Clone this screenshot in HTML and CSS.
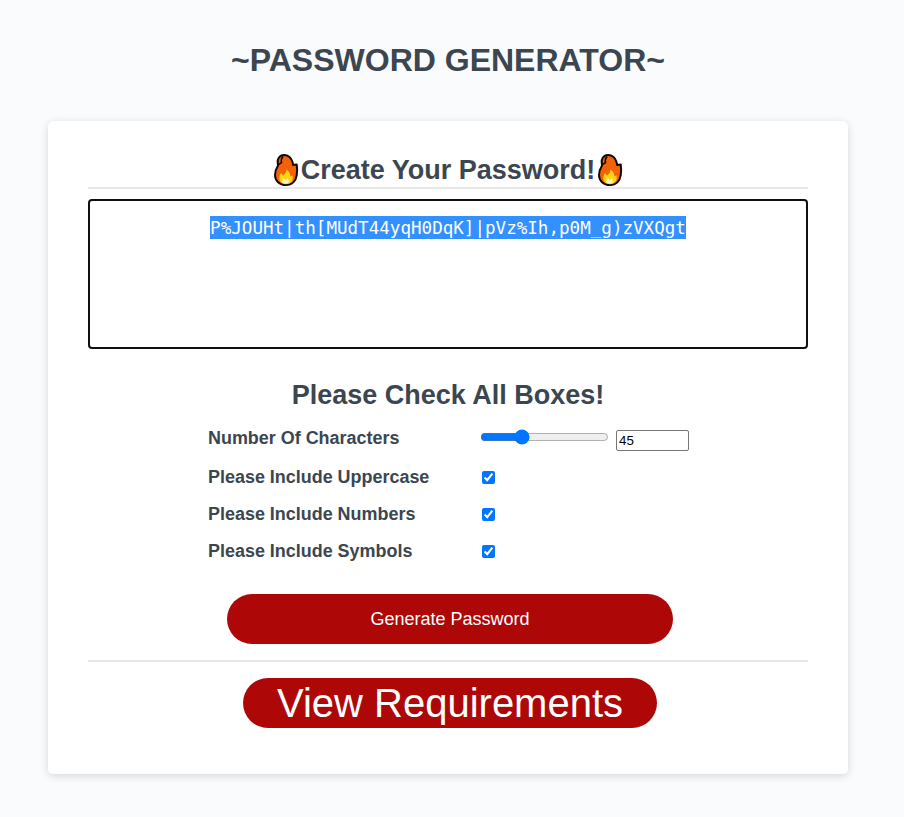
FILE: index.html
```html
<!DOCTYPE html>
<html lang="en">
<head>
<meta charset="utf-8">
<title>Password Generator</title>
<link rel="stylesheet" href="styles.css">
</head>
<body>
<svg class="defs" width="0" height="0" aria-hidden="true">
  <symbol id="flame" viewBox="0 0 26 34">
    <path d="M5 12.4C4.2 8.5 4.6 5.2 7.2 3.2 9.4 2 12 1.8 14.4 2.7c3.2 1.4 5 4.3 5.8 9.3l3.5-.6c.5 3.2.7 7.3 0 11C22.9 28 19 32 13 32 6.5 32 2 27.8 2 22c0-4.2 1.3-6.8 3-9.6Z" fill="#f4610b" stroke="#0b0907" stroke-width="2" stroke-linejoin="round"/>
    <path d="M10 3.5C8.2 5.6 8 7.6 8.5 9.6L5.4 11.6" fill="none" stroke="#0b0907" stroke-width="1.6"/>
    <path d="M8 29.4C5.6 26.6 6 23.3 8 20l2 2.6c2.1-1.5 3.5-3.7 3.5-6.1 2.5 1.8 3.9 4.2 3.9 7l2-1.2c1 3.6-.1 6.4-2.6 8-3.2 1.4-6.5 1-8.8-.9Z" fill="#ffd414"/>
    <path d="M9.6 29.8c-.7-2 .1-3.4 1.4-4.6l1.7 1.8 2-1.5c1.3 1.5 1.5 3 .8 4.3-1.9 1-4.1 1-5.9 0Z" fill="#fff6b8"/>
  </symbol>
</svg>
<h1 class="title">~PASSWORD GENERATOR~</h1>
<main class="card">
  <header class="card-header">
    <svg class="flame"><use href="#flame"/></svg>
    <h2>Create Your Password!</h2>
    <svg class="flame"><use href="#flame"/></svg>
  </header>
  <div class="output"><span class="selected">P%JOUHt|th[MUdT44yqH0DqK]|pVz%Ih,p0M_g)zVXQgt</span></div>
  <h2 class="subtitle">Please Check All Boxes!</h2>
  <form class="options">
    <label for="range">Number Of Characters</label>
    <div class="amount">
      <input id="range" class="range" type="range" min="1" max="128" value="39">
      <input class="number" type="text" value="45" aria-label="Characters">
    </div>
    <label for="upper">Please Include Uppercase</label>
    <input id="upper" class="check" type="checkbox" checked>
    <label for="numbers">Please Include Numbers</label>
    <input id="numbers" class="check" type="checkbox" checked>
    <label for="symbols">Please Include Symbols</label>
    <input id="symbols" class="check" type="checkbox" checked>
  </form>
  <button class="btn generate" type="button">Generate Password</button>
  <footer class="card-footer">
    <button class="btn requirements" type="button">View Requirements</button>
  </footer>
</main>
</body>
</html>
```
FILE: styles.css
```css
* { box-sizing: border-box; }
body {
  margin: 0;
  height: 817px;
  overflow: hidden;
  background: #fafbfd;
  color: #3b4650;
  font-family: "Liberation Sans", Arial, sans-serif;
}
.defs { display: block; }
h1, h2 { margin: 0; }
.title {
  width: 896px;
  padding-top: 40px;
  font-size: 32px;
  line-height: 40px;
  text-align: center;
}
.card {
  width: 800px;
  height: 653px;
  margin: 41px 0 0 48px;
  padding: 31px 40px 0;
  background: #fff;
  border-radius: 5px;
  box-shadow: 0 2px 8px rgba(0, 0, 0, .15);
}
.card-header {
  display: flex;
  justify-content: center;
  align-items: center;
  gap: 2px;
  height: 37px;
  border-bottom: 2px solid #e7e7e7;
}
h2 { font-size: 27px; line-height: 35px; white-space: nowrap; }
.card-header h2 { padding-top: 2px; line-height: 33px; }
.flame { width: 26px; height: 34px; flex: none; }
.output {
  height: 150px;
  margin-top: 10px;
  padding-top: 15px;
  border: 2px solid #101010;
  border-radius: 4px;
  text-align: center;
}
.selected {
  display: inline-block;
  height: 23px;
  background: #3390ff;
  color: #fff;
  font: 17.57px/25px "DejaVu Sans Mono", monospace;
  white-space: nowrap;
}
.subtitle { margin-top: 29px; text-align: center; }
.options {
  display: grid;
  grid-template-columns: 272px 209px;
  grid-template-rows: 44px repeat(3, 37px);
  align-items: center;
  width: 481px;
  margin: 2px 0 0 120px;
  font-size: 17.95px;
  font-weight: bold;
}
.options > :nth-child(-n+2) { margin-top: 2px; }
.amount { display: flex; align-items: center; gap: 7px; }
.range { width: 129px; height: 16px; margin: 0 0 2px; }
.number {
  width: 73px;
  height: 21px;
  margin-top: 5px;
  padding: 1px 2px;
  border: 1px solid #767676;
  border-radius: 2px;
  font: 13.333px "Liberation Sans", Arial, sans-serif;
  color: #000;
}
.check { width: 13px; height: 13px; margin: 0 0 0 2px; }
.btn {
  display: block;
  height: 50px;
  padding: 0;
  border: 0;
  border-radius: 25px;
  background: #ae0707;
  color: #fff;
  font: 18px/50px "Liberation Sans", Arial, sans-serif;
  white-space: nowrap;
}
.generate { width: 446px; margin: 24px 0 0 139px; }
.card-footer { margin-top: 16px; padding-top: 16px; border-top: 2px solid #e7e7e7; }
.requirements { width: 414px; margin-left: 155px; font-size: 40px; }
```
